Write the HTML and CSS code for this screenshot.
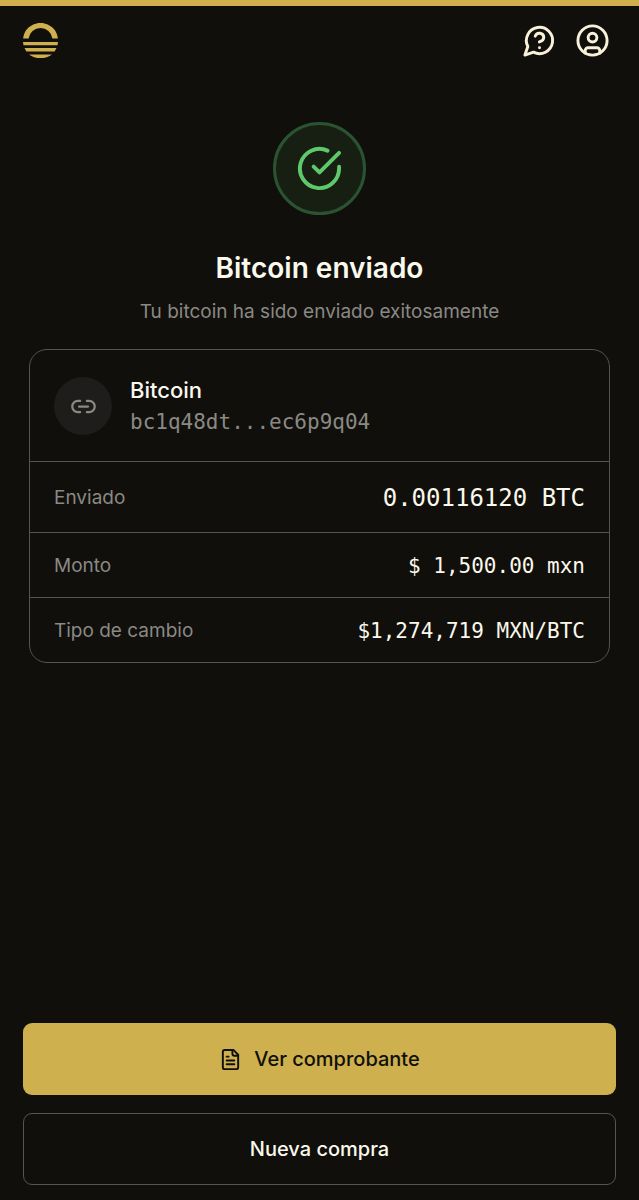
FILE: index.html
```
<!DOCTYPE html>
<html lang="es">
<head>
  <meta charset="UTF-8">
  <meta name="viewport" content="width=device-width, initial-scale=1.0">
  <title>Bitcoin enviado</title>
  <link rel="stylesheet" href="styles.css">
</head>
<body>
  <header class="header">
    <a href="#" class="logo" aria-label="Inicio">
      <svg width="35" height="35" viewBox="0 0 35 35" fill="currentColor">
        <path d="M.1 15.5a17.5 17.5 0 0 1 34.8 0h-5.5a12 12 0 0 0-23.8 0z"/>
        <path d="M0 19h35l-.5 3.2H.5z"/>
        <path d="M1.5 25h32l-1.9 3.6H3.4z"/>
        <path d="M6 31.4h23C26 33.9 22 35 17.5 35S9 33.9 6 31.4z"/>
      </svg>
    </a>
    <nav class="acciones">
      <button type="button" class="icon-btn" aria-label="Ayuda">
        <svg width="35" height="35" viewBox="0 0 24 24" class="icon">
          <path d="M7.9 20A9 9 0 1 0 4 16.1L2 22Z"/>
          <path d="M9.09 9a3 3 0 0 1 5.83 1c0 2-3 3-3 3"/>
          <path d="M12 17h.01"/>
        </svg>
      </button>
      <button type="button" class="icon-btn" aria-label="Cuenta">
        <svg width="35" height="35" viewBox="0 0 24 24" class="icon">
          <circle cx="12" cy="12" r="10"/>
          <circle cx="12" cy="10" r="3"/>
          <path d="M7 20.662V19a2 2 0 0 1 2-2h6a2 2 0 0 1 2 2v1.662"/>
        </svg>
      </button>
    </nav>
  </header>

  <main class="contenido">
    <div class="estado">
      <svg width="47" height="47" viewBox="0 0 24 24" class="icon">
        <path d="M22 11.08V12a10 10 0 1 1-5.93-9.14"/>
        <path d="M22 4 12 14.01l-3-3"/>
      </svg>
    </div>
    <h1>Bitcoin enviado</h1>
    <p class="subtitulo">Tu bitcoin ha sido enviado exitosamente</p>

    <section class="tarjeta">
      <div class="destino">
        <div class="destino-icono">
          <svg width="27" height="27" viewBox="0 0 24 24" class="icon">
            <path d="M9 17H7A5 5 0 0 1 7 7h2"/>
            <path d="M15 7h2a5 5 0 1 1 0 10h-2"/>
            <path d="M8 12h8"/>
          </svg>
        </div>
        <div>
          <h2>Bitcoin</h2>
          <p class="direccion">bc1q48dt...ec6p9q04</p>
        </div>
      </div>
      <dl class="detalles">
        <div class="fila fila-total">
          <dt>Enviado</dt>
          <dd>0.00116120 BTC</dd>
        </div>
        <div class="fila">
          <dt>Monto</dt>
          <dd>$ 1,500.00 mxn</dd>
        </div>
        <div class="fila">
          <dt>Tipo de cambio</dt>
          <dd>$1,274,719 MXN/BTC</dd>
        </div>
      </dl>
    </section>
  </main>

  <footer class="botones">
    <button type="button" class="btn btn-primario">
      <svg width="23" height="23" viewBox="0 0 24 24" class="icon">
        <path d="M15 2H6a2 2 0 0 0-2 2v16a2 2 0 0 0 2 2h12a2 2 0 0 0 2-2V7Z"/>
        <path d="M14 2v4a2 2 0 0 0 2 2h4"/>
        <path d="M10 9H8"/>
        <path d="M16 13H8"/>
        <path d="M16 17H8"/>
      </svg>
      Ver comprobante
    </button>
    <button type="button" class="btn btn-secundario">Nueva compra</button>
  </footer>
</body>
</html>
```

FILE: styles.css
```
* {
  box-sizing: border-box;
  margin: 0;
  padding: 0;
}

body {
  min-height: 100vh;
  display: flex;
  flex-direction: column;
  border-top: 6px solid #ceb04e;
  background: #100f0b;
  color: #fbf8ec;
  font-family: 'Inter', sans-serif;
  font-size: 19px;
  line-height: 32px;
}

button {
  font: inherit;
  color: inherit;
  background: none;
  border: none;
  cursor: pointer;
}

svg {
  display: block;
}

.icon {
  fill: none;
  stroke: currentColor;
  stroke-width: 2;
  stroke-linecap: round;
  stroke-linejoin: round;
}

/* Header */
.header {
  display: flex;
  justify-content: space-between;
  align-items: center;
  padding: 17px 29px 18px 23px;
}

.logo {
  color: #ceb04e;
}

.acciones {
  display: flex;
  gap: 18px;
  color: #f9f0d9;
}

/* Content */
.contenido {
  display: flex;
  flex-direction: column;
  align-items: center;
  padding: 46px 29px 32px;
}

.estado {
  display: flex;
  justify-content: center;
  align-items: center;
  width: 93px;
  height: 93px;
  border: 3px solid #2a5431;
  border-radius: 50%;
  background: #171f13;
  color: #5fc86b;
}

h1 {
  margin-top: 35px;
  font-size: 28px;
  font-weight: 600;
  line-height: 36px;
}

.subtitulo {
  margin-top: 10px;
  color: #8a8984;
}

.tarjeta {
  width: 100%;
  margin-top: 21px;
  border: 1px solid #55544f;
  border-radius: 18px;
}

.destino {
  display: flex;
  align-items: center;
  gap: 18px;
  padding: 24px 24px 23px;
}

.destino-icono {
  display: flex;
  justify-content: center;
  align-items: center;
  width: 58px;
  height: 58px;
  border-radius: 50%;
  background: #1e1d1c;
  color: #8a8984;
}

h2 {
  font-size: 22px;
  font-weight: 500;
  line-height: 32px;
}

.direccion,
dd {
  font-family: 'DejaVu Sans Mono', monospace;
  font-size: 21px;
}

.direccion,
dt {
  color: #8a8984;
}

.fila {
  display: flex;
  justify-content: space-between;
  align-items: center;
  padding: 17px 24px 15px;
  border-top: 1px solid #55544f;
}

.fila-total {
  padding: 20px 24px 18px;
}

.fila-total dd {
  font-size: 24px;
}

/* Buttons */
.botones {
  display: flex;
  flex-direction: column;
  gap: 18px;
  margin-top: auto;
  padding: 0 23px 15px;
}

.btn {
  display: flex;
  justify-content: center;
  align-items: center;
  gap: 12px;
  height: 72px;
  border-radius: 9px;
  font-size: 20px;
  font-weight: 500;
}

.btn-primario {
  background: #ceb04e;
  color: #100f0b;
}

.btn-secundario {
  border: 1px solid #55544f;
}
```
